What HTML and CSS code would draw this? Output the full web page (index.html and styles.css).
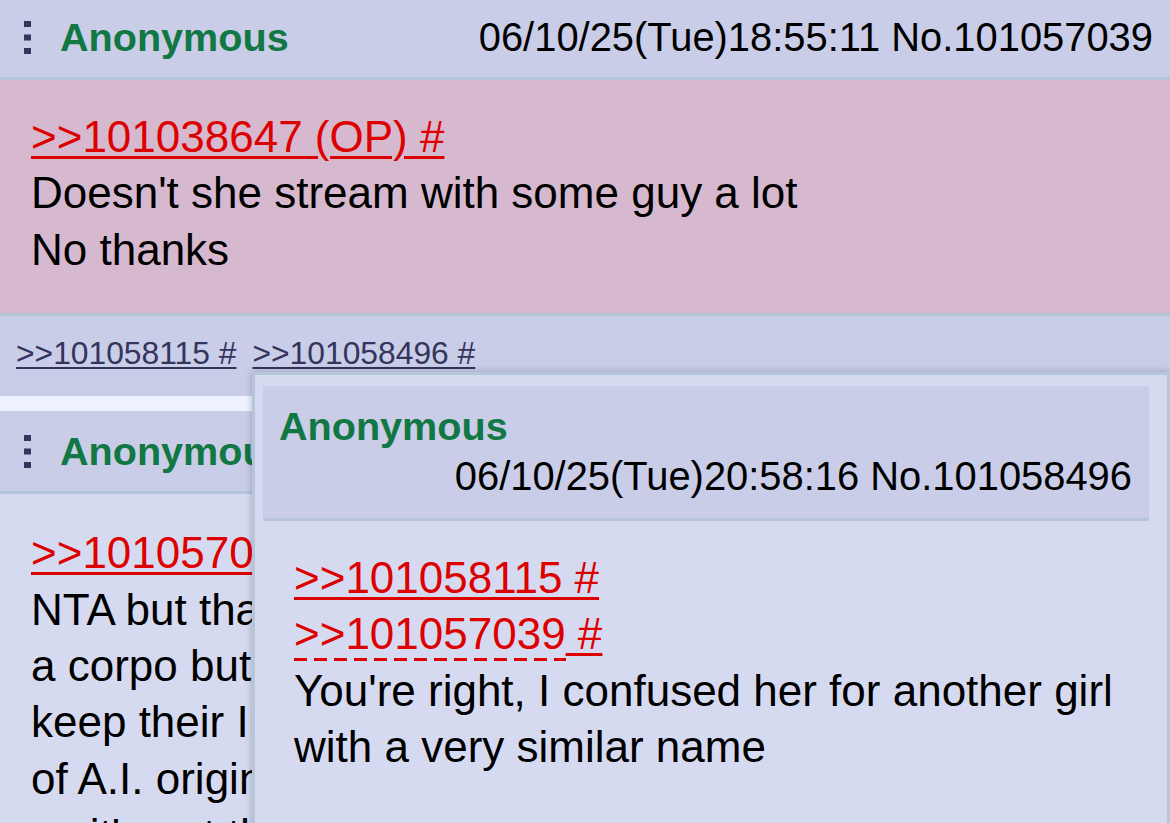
FILE: index.html
```html
<!DOCTYPE html>
<html lang="en">
<head>
    <meta charset="UTF-8">
    <meta name="viewport" content="width=device-width, initial-scale=1.0">
    <title>/vt/ - Thread</title>
    <link rel="stylesheet" href="styles.css">
</head>
<body>
    <div class="thread">
        <div class="post">
            <div class="post-head">
                <svg class="menu" width="7" height="33" viewBox="0 0 7 33">
                    <rect x="0" y="0" width="7" height="6"/>
                    <rect x="0" y="13.5" width="7" height="6"/>
                    <rect x="0" y="27" width="7" height="6"/>
                </svg>
                <span class="name">Anonymous</span>
                <span class="date">06/10/25(Tue)18:55:11 No.101057039</span>
            </div>
            <blockquote class="post-body highlight">
                <a class="quotelink" href="#">&gt;&gt;101038647 (OP) #</a><br>
                Doesn't she stream with some guy a lot<br>
                No thanks
            </blockquote>
            <div class="backlinks">
                <a href="#">&gt;&gt;101058115 #</a>
                <a href="#">&gt;&gt;101058496 #</a>
            </div>
        </div>

        <div class="post">
            <div class="post-head">
                <svg class="menu" width="7" height="33" viewBox="0 0 7 33">
                    <rect x="0" y="0" width="7" height="6"/>
                    <rect x="0" y="13.5" width="7" height="6"/>
                    <rect x="0" y="27" width="7" height="6"/>
                </svg>
                <span class="name">Anonymous</span>
                <span class="date">06/10/25(Tue)20:41:07 No.101058115</span>
            </div>
            <blockquote class="post-body reply-body">
                <a class="quotelink" href="#">&gt;&gt;101057039 #</a><br>
                NTA but that's how it goes when you sign with<br>
                a corpo but at least they let the talents<br>
                keep their IP, unlike the ones that got accused<br>
                of A.I. origins for the new model reveal<br>
                so it's not that deep desu
            </blockquote>
        </div>
    </div>

    <!-- hover preview of the reply -->
    <div class="preview">
        <div class="preview-head">
            <span class="name">Anonymous</span>
            <span class="date">06/10/25(Tue)20:58:16 No.101058496</span>
        </div>
        <blockquote class="post-body">
            <a class="quotelink" href="#">&gt;&gt;101058115 #</a><br>
            <a class="quotelink linked" href="#">&gt;&gt;101057039</a><a class="quotelink" href="#"> #</a><br>
            You're right, I confused her for another girl with a very similar name
        </blockquote>
    </div>
</body>
</html>
```

FILE: styles.css
```css
body {
    margin: 0;
    background: #eef2ff;
    color: #000;
    font-family: 'Liberation Sans', Arial, sans-serif;
    overflow: hidden;
}

.thread {
    margin-top: -3px;
}

.post {
    margin-bottom: 15px;
    background: #c9cde8;
}

.post-head {
    display: flex;
    align-items: center;
    height: 80px;
    padding: 0 17px 0 24px;
    background: #c9cde8;
    border-bottom: 3px solid #b7c5d9;
    font-size: 39.6px;
}

.menu {
    margin-right: 29px;
    fill: #34345c;
    flex-shrink: 0;
}

.name {
    color: #117743;
    font-weight: bold;
}

.date {
    font-size: 39.9px;
}

.post-head .date {
    margin-left: auto;
    white-space: nowrap;
}

.post-body {
    margin: 0;
    padding: 29px 31px 35px 31px;
    background: #d6daf0;
    font-size: 44px;
    line-height: 56.4px;
}

.post-body.highlight {
    background: #d6b8cf;
    border-bottom: 3px solid #b7c5d9;
}

.post-body.reply-body {
    padding-top: 31px;
}

.quotelink {
    color: #dd0000;
    text-decoration: underline;
    text-decoration-thickness: 3px;
    text-underline-offset: 4px;
}

.quotelink.linked {
    text-decoration: none;
    padding-bottom: 3px;
    background: linear-gradient(to right, #dd0000 13px, transparent 13px) 0 100% / 20px 3px repeat-x;
}

.backlinks {
    display: flex;
    gap: 16px;
    padding: 19px 16px 24px;
    font-size: 31.8px;
}

.backlinks a {
    color: #34345c;
    text-decoration: underline;
    text-decoration-thickness: 2px;
    text-underline-offset: 3px;
}

.preview {
    position: absolute;
    left: 252px;
    top: 372px;
    right: 0;
    height: 520px;
    padding: 11px 18px 0 8px;
    background: #d6daf0;
    border: 3px solid #b7c5d9;
    box-shadow: 0 0 7px rgba(0, 0, 0, 0.25);
}

.preview-head {
    padding: 15px 17px 17px 16px;
    background: #c9cde8;
    border-bottom: 3px solid #b7c5d9;
    font-size: 39.6px;
    line-height: 50px;
}

.preview-head .name {
    display: block;
}

.preview-head .date {
    display: block;
    text-align: right;
}

.preview .post-body {
    padding-top: 29px;
}
```
